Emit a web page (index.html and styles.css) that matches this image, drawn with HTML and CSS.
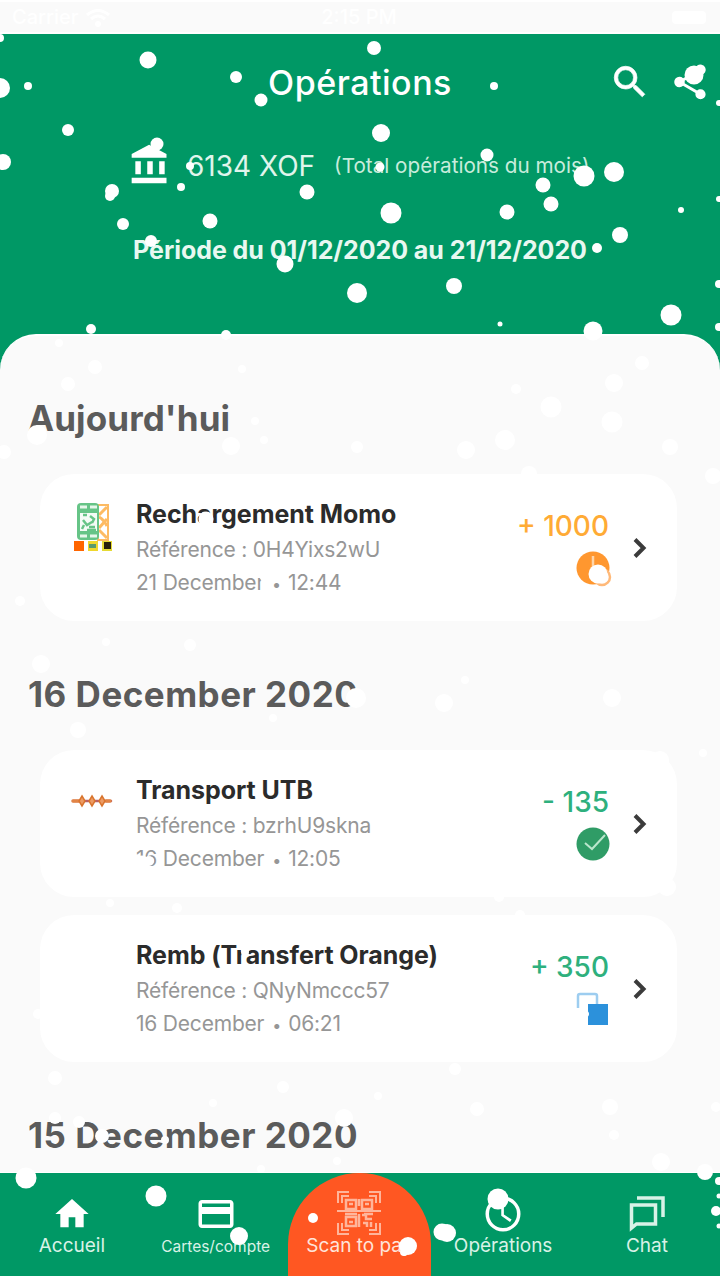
FILE: index.html
```
<!DOCTYPE html>
<html lang="fr">
<head>
  <meta charset="UTF-8" />
  <meta name="viewport" content="width=device-width, initial-scale=1.0"/>
  <title>Opérations</title>
  <link rel="stylesheet" href="styles.css">
</head>
<body>
  <div class="screen">

    <div class="status-bar">
      <span class="carrier">Carrier
        <svg width="26" height="19" viewBox="0 0 26 19" fill="none" stroke="#fff" stroke-width="3"><path d="M2 7q11-9 22 0M6 11q7-6 14 0"/><circle cx="13" cy="16" r="1.5"/></svg>
      </span>
      <span>2:15 PM</span>
      <span class="battery"></span>
    </div>

    <header class="header">
      <div class="title-row">
        <h1>Opérations</h1>
        <div class="actions">
          <svg class="search" width="42" height="42" viewBox="0 0 24 24"><path d="M15.5 14h-.79l-.28-.27A6.47 6.47 0 0 0 16 9.500 6.500 6.500 0 1 0 9.500 16c1.610 0 3.090-.59 4.230-1.570l.27.28v.79l5 4.990L20.490 19l-4.990-5zm-6 0a4.500 4.500 0 1 1 0-9 4.500 4.500 0 0 1 0 9z"/></svg>
          <svg width="42" height="42" viewBox="0 0 24 24" fill="#fff"><path d="M18 16.080c-.76 0-1.440.3-1.960.77L8.910 12.700c.05-.23.09-.46.09-.7s-.04-.47-.09-.7l7.050-4.110A3 3 0 1 0 15 5c0 .24.04.47.09.7L8.040 9.810a3 3 0 1 0 0 4.380l7.120 4.160c-.05.21-.08.43-.08.65a2.920 2.920 0 1 0 2.920-2.920z"/></svg>
        </div>
      </div>
      <div class="total-row">
        <svg width="44" height="44" viewBox="0 0 24 24" fill="#fff"><path d="M4 10v7h3v-7H4zm6.500 0v7h3v-7h-3zM2 22h19v-3H2v3zm15-12v7h3v-7h-3zM11.500 1L2 6v2h19V6l-9.500-5z"/></svg>
        <span class="total">6134 XOF</span>
        <span class="total-note">(Total opérations du mois)</span>
      </div>
      <p class="period">Période du 01/12/2020 au 21/12/2020</p>
    </header>

    <main class="sheet">
      <h2 class="today">Aujourd'hui</h2>
      <div class="card">
        <div class="logo">
          <svg width="42" height="50" viewBox="0 0 42 50">
            <path d="M27 2h10v35H27z" fill="#fff" stroke="#fdbb63" stroke-width="2"/>
            <path d="M28 12l8-8M28 14c4 2 6 5 8 9M28 25l8-9M28 27l8 8" stroke="#fdbb63" stroke-width="3"/>
            <rect x="6" y="0" width="22" height="37" rx="4" fill="#66c487"/>
            <path d="M9 4h7M19 4h7M9 33h7M19 33h7" stroke="#e7f7eb" stroke-width="3"/>
            <path d="M9 10h17v18H9z" fill="#f4fbf6"/>
            <path d="M12 17l4 5 5-3M19 13l4 3-2 4M12 12h4M11 26l2-4M18 24h6M16 27h9" fill="none" stroke="#66c487" stroke-width="2.500"/>
            <path d="M3 38h10v10H3z" fill="#ff6500"/>
            <path d="M17 38h10v10H17z" fill="#f0d72c"/>
            <path d="M18 41h7v4h-7z" fill="#5b9a6c"/>
            <path d="M31 38h10v10H31z" fill="#e5da35"/>
            <path d="M33 39h7v7h-7z" fill="#27200e"/>
          </svg>
        </div>
        <div class="info">
          <h3>Rechargement Momo</h3>
          <p>Référence : 0H4Yixs2wU</p>
          <p>21 December <b>•</b> 12:44</p>
        </div>
        <div class="amount pending">
          <span>+ 1000</span>
          <svg width="36" height="36" viewBox="0 0 36 36"><circle cx="17" cy="17" r="16.500" fill="#ff972f"/><path d="M17 5v14" stroke="#ffd5a8" stroke-width="2.500"/><circle cx="26" cy="26" r="8" fill="#fff" stroke="#ffb979" stroke-width="2.500"/></svg>
        </div>
        <svg class="chevron" width="14" height="20" viewBox="0 0 14 20"><path d="M2 1.500l8.500 8.500L2 18.500"/></svg>
      </div>

      <h2>16 December 2020</h2>
      <div class="card">
        <div class="logo">
          <svg width="42" height="50" viewBox="0 0 42 50"><path d="M2 22h38" stroke="#b9606a" stroke-width="2.500" stroke-linecap="round"/><path d="M2 22h6M35 22h4" stroke="#e28446" stroke-width="3.500" stroke-linecap="round"/><path d="M11 17l3 5-3 5-3-5zM21 17l3 5-3 5-3-5zM31 17l3 5-3 5-3-5z" fill="#ed9b64" stroke="#d9752f" stroke-width="1.500"/></svg>
        </div>
        <div class="info">
          <h3>Transport UTB</h3>
          <p>Référence : bzrhU9skna</p>
          <p>16 December <b>•</b> 12:05</p>
        </div>
        <div class="amount">
          <span>- 135</span>
          <svg width="36" height="36" viewBox="0 0 36 36"><circle cx="17" cy="17" r="16.500" fill="#2f9c66"/><path d="M9 16l7 6L29 8" fill="none" stroke="#b9e6cc" stroke-width="2"/></svg>
        </div>
        <svg class="chevron" width="14" height="20" viewBox="0 0 14 20"><path d="M2 1.500l8.500 8.500L2 18.500"/></svg>
      </div>
      <div class="card">
        <div class="logo"></div>
        <div class="info">
          <h3>Remb (Transfert Orange)</h3>
          <p>Référence : QNyNmccc57</p>
          <p>16 December <b>•</b> 06:21</p>
        </div>
        <div class="amount">
          <span>+ 350</span>
          <svg width="36" height="36" viewBox="0 0 36 36"><path d="M2 16V4q0-2 2-2h15q2 0 2 2v10" fill="none" stroke="#9dcdf0" stroke-width="2.500"/><path d="M12 12h20v21H12z" fill="#2c91db"/></svg>
        </div>
        <svg class="chevron" width="14" height="20" viewBox="0 0 14 20"><path d="M2 1.500l8.500 8.500L2 18.500"/></svg>
      </div>

      <h2>15 December 2020</h2>
    </main>

    <nav class="tabs">
      <div class="tab">
        <svg width="40" height="42" viewBox="0 0 24 24" fill="#fff"><path d="M10 20v-6h4v6h5v-8h3L12 3 2 12h3v8z"/></svg>
        <span>Accueil</span>
      </div>
      <div class="tab small">
        <svg width="42" height="42" viewBox="0 0 24 24" fill="#fff"><path d="M20 4H4c-1.110 0-2 .89-2 2v12c0 1.110.89 2 2 2h16c1.110 0 2-.89 2-2V6c0-1.110-.89-2-2-2zm0 14H4v-6h16v6zm0-10H4V6h16v2z"/></svg>
        <span>Cartes/compte</span>
      </div>
      <div class="tab scan">
        <svg width="44" height="44" viewBox="0 0 44 44" fill="none" stroke="#ffb59b" stroke-width="2"><path d="M1 12V1h11M5 12V5h7M32 1h11v11M32 5h7v7M43 32v11H32M39 32v7h-7M12 43H1V32M5 32v7h7M0 20h44"/><path d="M9 9h10v9H9zM25 9h10v9H25zM9 26h10v9H9zM12 13h4M28 13h4M12 31h4M22 8v7M22 23v13M25 24h4v4h6M26 32h4v4M34 31v5M8 23h12M27 23h9" stroke-width="2.500"/></svg>
        <span>Scan to pay</span>
      </div>
      <div class="tab">
        <svg width="42" height="42" viewBox="0 0 24 24" fill="#fff"><path d="M12 2a10 10 0 1 0 0 20 10 10 0 0 0 0-20zm0 18a8 8 0 1 1 0-16 8 8 0 0 1 0 16zm.5-13H11v6l5 3.500.9-1.300-4.400-2.900z"/></svg>
        <span>Opérations</span>
      </div>
      <div class="tab">
        <svg width="42" height="42" viewBox="0 0 42 42" fill="none" stroke="#d8f2e7" stroke-width="3.500"><path d="M5.500 12h24v19h-19l-5 4zM11 5h26v19"/></svg>
        <span>Chat</span>
      </div>
    </nav>

    <svg class="snow" id="snow" width="720" height="1278" viewBox="0 0 720 1278" fill="#fff"></svg>
  </div>

  <script>
    // x, y, radius of every snowflake
    const flakes = [
      [0, 38, 4], [0, 88, 10], [28, 86, 4], [148, 60, 8.5], [236, 77, 6], [261, 100, 6.5],
      [374, 48, 7], [494, 86, 4], [68, 130, 6], [3, 162, 8], [381, 133, 9], [157, 144, 6.5],
      [487, 155, 6.5], [190, 166, 4], [380, 167, 4.5], [694, 75, 9.5], [719, 103, 3],
      [112, 191, 7], [110, 196, 5], [181, 187, 4], [307, 192, 7.5], [584, 176, 10.5], [614, 172, 10],
      [543, 185, 7.5], [551, 204, 7.5], [507, 212, 7.5], [391, 213, 10.5], [210, 221, 7.5],
      [123, 224, 6], [151, 241, 6], [285, 264, 8.5], [357, 293, 10], [454, 286, 8], [597, 248, 5],
      [620, 235, 8], [681, 210, 3], [500, 324, 2.5], [671, 315, 10.5], [593, 331, 9.5], [91, 329, 5],
      [226, 335, 5], [719, 199, 3], [719, 284, 4], [719, 327, 4],
      [59, 343, 4], [95, 367, 7], [68, 384, 7], [37, 435, 10], [4, 452, 7], [242, 369, 4], [255, 421, 4],
      [231, 446, 9], [264, 440, 4], [357, 447, 6], [516, 389, 5], [642, 363, 7], [614, 383, 9],
      [551, 407, 10.5], [612, 422, 10.5], [505, 440, 10], [466, 450, 9], [670, 447, 8], [529, 474, 8],
      [713, 476, 8], [206, 519, 7.5], [598, 574, 9.5], [265, 577, 5], [20, 601, 5], [106, 642, 4],
      [190, 645, 6], [41, 664, 9], [356, 698, 10], [444, 703, 9], [612, 698, 9], [465, 680, 4],
      [273, 718, 4], [78, 730, 8], [660, 760, 9], [142, 863, 7.5], [149, 861, 5], [667, 887, 9], [703, 753, 4],
      [110, 903, 4], [177, 908, 5], [499, 897, 5], [520, 915, 5], [245, 952, 4],
      [38, 1014, 5], [586, 1014, 3], [455, 1069, 6], [55, 1078, 7], [283, 1087, 6], [213, 1103, 4],
      [477, 1109, 7], [378, 1096, 4], [610, 1107, 8], [716, 1107, 5], [614, 1135, 5], [55, 1118, 6],
      [79, 1122, 6], [102, 1136, 7], [165, 1140, 4], [344, 1118, 9], [337, 1161, 4], [261, 1169, 4],
      [661, 1162, 9], [705, 1172, 8], [26, 1178, 10.5], [156, 1196, 10.5], [239, 1236, 9],
      [313, 1218, 5], [408, 1246, 9], [404, 1252, 4], [442, 1232, 8.5], [447, 1233, 9], [498, 1199, 10.5],
      [716, 1211, 5], [719, 1181, 4], [719, 1196, 2.5], [719, 1226, 2.5]
    ];

    document.getElementById("snow").innerHTML = flakes
      .map(([x, y, r]) => `<circle cx="${x}" cy="${y}" r="${r}"/>`)
      .join("");
  </script>
</body>
</html>
```
FILE: styles.css
```
body {
  margin: 0;
  font-family: Inter, "Liberation Sans", sans-serif;
  background: #fff;
}
h1, h2, h3, p {
  margin: 0;
}
svg {
  display: block;
  flex: none;
}
.screen {
  position: relative;
  width: 720px;
  height: 1276px;
  overflow: hidden;
  display: flex;
  flex-direction: column;
  background: #009865;
}
.status-bar {
  display: grid;
  grid-template-columns: 1fr auto 1fr;
  align-items: center;
  height: 30px;
  padding: 0 14px 0 12px;
  border-top: 2px solid #fff;
  border-bottom: 2px solid #fff;
  background: #fafafa;
  color: #fff;
  font-size: 20px;
  font-weight: 500;
}
.carrier {
  display: flex;
  align-items: center;
  gap: 6px;
}
.battery {
  justify-self: end;
  width: 34px;
  height: 13px;
  border-radius: 4px;
  background: #fff;
}
.header {
  height: 300px;
  color: #fff;
}
.title-row {
  display: grid;
  grid-template-columns: 1fr auto 1fr;
  align-items: center;
  height: 96px;
}
h1 {
  grid-column: 2;
  font-size: 34px;
  font-weight: 500;
  letter-spacing: 0.5px;
}
.actions {
  display: flex;
  justify-content: flex-end;
  gap: 18px;
  padding-right: 9px;
}
.search {
  fill: #fff;
  stroke: #fff;
  stroke-width: 0.4;
}
.total-row {
  display: flex;
  align-items: center;
  height: 70px;
  padding-left: 128px;
}
.total {
  margin: 2px 0 0 15px;
  font-size: 28px;
  color: #e0f5ec;
}
.total-note {
  margin-left: 19px;
  font-size: 20.7px;
  color: #c8ecdc;
}
.period {
  padding-top: 35px;
  text-align: center;
  font-size: 25px;
  line-height: 30px;
  font-weight: 700;
  letter-spacing: -0.05px;
  color: #e8f8f1;
}
.sheet {
  box-sizing: border-box;
  flex: 1;
  padding: 58px 43px 0 40px;
  border-top: 2px solid #fff;
  border-radius: 36px 36px 0 0;
  background: #fafafa;
}
h2 {
  margin-left: -12px;
  font-size: 35px;
  line-height: 48px;
  font-weight: 700;
  letter-spacing: 0.5px;
  color: #5b5b5b;
}
h2.today {
  letter-spacing: 0.1px;
}
.card {
  box-sizing: border-box;
  display: flex;
  height: 147px;
  margin-top: 32px;
  padding: 25px 30px 0 31px;
  border-radius: 34px;
  background: #fff;
}
.card + h2 {
  margin-top: 49px;
}
.card + .card {
  margin-top: 18px;
}
.logo {
  width: 42px;
  padding-top: 4px;
}
.info {
  flex: 1;
  padding-left: 23px;
  white-space: nowrap;
}
h3 {
  font-size: 25px;
  line-height: 31px;
  font-weight: 700;
  letter-spacing: -0.05px;
  color: #2b2b2b;
}
.info p {
  margin-top: 5px;
  font-size: 21px;
  line-height: 28px;
  letter-spacing: -0.2px;
  color: #969696;
}
.info h3 + p {
  margin-top: 6px;
}
.info b {
  margin: 0 2px 0 3px;
  font-size: 16px;
}
.amount {
  display: flex;
  flex-direction: column;
  align-items: flex-end;
  font-size: 28px;
  line-height: 36px;
  font-weight: 500;
  color: #2eb07d;
  padding-top: 9px;
}
.amount svg {
  margin: 7px -3px 0 0;
}
.amount.pending {
  color: #ffab35;
}
.chevron {
  margin: 39px 0 0 24px;
  fill: none;
  stroke: #3b3b3b;
  stroke-width: 4;
}
.tabs {
  display: grid;
  grid-template-columns: repeat(5, 143.75px);
  height: 103px;
  border-top: 1px solid #fff;
  background: #009865;
}
.tab {
  display: flex;
  flex-direction: column;
  align-items: center;
  padding-top: 20px;
  font-size: 19px;
  color: #d8f2e7;
  white-space: nowrap;
}
.tab span {
  line-height: 22px;
}
.tab.small span {
  font-size: 15.5px;
  line-height: 24px;
}
.tab.scan {
  padding-top: 18px;
  border-radius: 72px 72px 0 0;
  background: #ff5722;
  color: #ffe4da;
}
.snow {
  position: absolute;
  top: 0;
  left: 0;
  pointer-events: none;
}
```
